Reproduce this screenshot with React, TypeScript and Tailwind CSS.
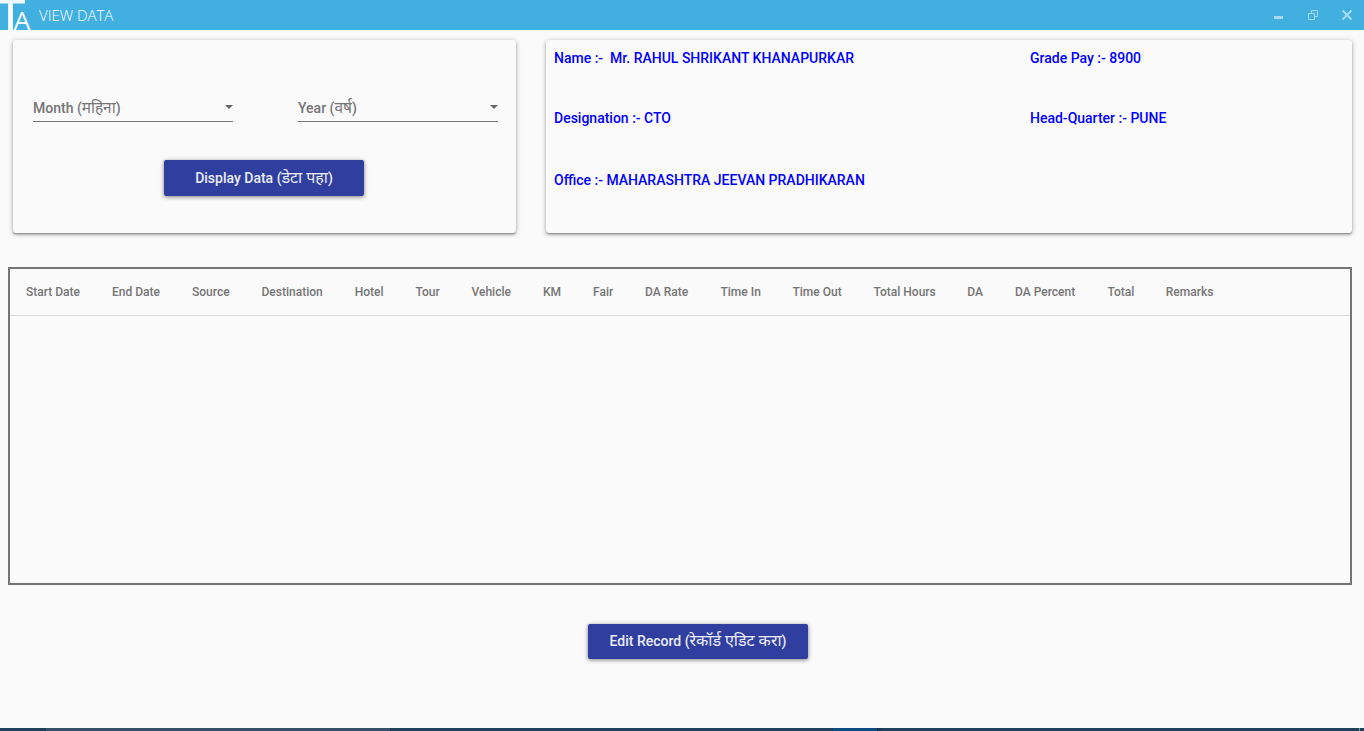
const columns = [
  { label: "Start Date", width: "w-[86px]" },
  { label: "End Date", width: "w-[80px]" },
  { label: "Source", width: "w-[69.5px]" },
  { label: "Destination", width: "w-[93.25px]" },
  { label: "Hotel", width: "w-[60.75px]" },
  { label: "Tour", width: "w-[56px]" },
  { label: "Vehicle", width: "w-[71.5px]" },
  { label: "KM", width: "w-[50px]" },
  { label: "Fair", width: "w-[52px]" },
  { label: "DA Rate", width: "w-[75.5px]" },
  { label: "Time In", width: "w-[72px]" },
  { label: "Time Out", width: "w-[81px]" },
  { label: "Total Hours", width: "w-[93.75px]" },
  { label: "DA", width: "w-[47.75px]" },
  { label: "DA Percent", width: "w-[92.5px]" },
  { label: "Total", width: "w-[58.25px]" },
  { label: "Remarks", width: "w-[80px]" },
];

const cardShadow =
  "rounded-[3px] bg-[#fafafa] shadow-[0_1px_5px_rgba(0,0,0,0.3),0_2px_2px_rgba(0,0,0,0.16),0_1px_1px_rgba(0,0,0,0.14)]";

function Select({ label, local }: { label: string; local: string }) {
  return (
    <div className="flex h-[25px] w-[200px] items-start justify-between border-b border-[#757575] text-[14px] leading-[20px] text-[#757575]">
      <span className="whitespace-nowrap pt-px">
        {label} (<span className="text-[15.4px] font-normal leading-none">{local}</span>)
      </span>
      <svg className="mt-2 h-[4px] w-[8px]" viewBox="0 0 8 4">
        <path d="M0 0h8L4 4z" fill="#666" />
      </svg>
    </div>
  );
}

function TitleBar() {
  return (
    <header className="flex h-[30px] items-center bg-[#41b0e1] text-white">
      <svg className="h-[30px] w-[32px] overflow-visible" viewBox="0 0 32 30">
        <rect width="25" height="3.5" fill="#eef8fc" />
        <rect x="8" width="5" height="30" fill="#e4f4fb" />
        <rect x="9" y="1" width="3" height="29" fill="#fafdfe" />
        <text x="13.5" y="29.8" fill="#f2fafd" fontFamily="Open Sans" fontSize="25" fontWeight="400" textLength="17" lengthAdjust="spacingAndGlyphs">A</text>
      </svg>
      <h1 className="ml-[7px] whitespace-nowrap font-['Open_Sans',sans-serif] text-[15px] font-light leading-[30px] tracking-[-0.02px]">VIEW DATA</h1>
      <div className="ml-auto flex items-center">
        <svg className="h-[30px] w-[90px]" viewBox="0 0 90 30" fill="none" stroke="#a5daf1">
          <path d="M0 17.5h9" strokeWidth="3" />
          <path d="M37.5 13V10.5h6v6h-3" />
          <path d="M34.5 13.5h6v6h-6z" />
          <path d="m68.5 10.5 9 9m0-9-9 9" strokeWidth="2" />
        </svg>
      </div>
    </header>
  );
}

export default function App() {
  return (
    <div className="flex h-[731px] w-[1364px] flex-col overflow-hidden bg-[#fafafa] font-[Roboto,'Noto_Sans',sans-serif] font-medium">
      <TitleBar />
      <main className="flex flex-1 flex-col">
        <div className="mt-[10px] flex gap-[30px] pl-[13px]">
          <section className={`h-[193px] w-[503px] pl-5 pt-[57px] ${cardShadow}`}>
            <div className="flex gap-[65px]">
              <Select label="Month" local="महिना" />
              <Select label="Year" local="वर्ष" />
            </div>
            <button className="ml-[131px] mt-[38px] flex h-[36px] w-[200px] items-center justify-center rounded-[2px] bg-[#303f9f] text-[14px] text-white/90 shadow-[0_1px_4px_rgba(0,0,0,0.5)]">
              <span className="whitespace-nowrap leading-[20px]">
                Display Data (<span className="text-[16px] font-normal leading-none">डेटा पहा</span>)
              </span>
            </button>
          </section>
          <section className={`grid h-[193px] w-[806px] grid-cols-[476px_1fr] grid-rows-[60px_62px_20px] whitespace-pre pl-2 pt-2 text-[14px] leading-[20px] text-[#0000ff] ${cardShadow}`}>
            <span>{"Name :-  Mr. RAHUL SHRIKANT KHANAPURKAR"}</span>
            <span>Grade Pay :- 8900</span>
            <span>Designation :- CTO</span>
            <span>Head-Quarter :- PUNE</span>
            <span>Office :- MAHARASHTRA JEEVAN PRADHIKARAN</span>
          </section>
        </div>
        <section className="ml-2 mt-[34px] h-[318px] w-[1344px] border-2 border-[#757575]">
          <div className="flex h-[47px] items-center border-b border-[#dadada] pl-4 text-[12px] text-[#757575]">
            {columns.map((column) => (
              <div key={column.label} className={`shrink-0 whitespace-nowrap ${column.width}`}>{column.label}</div>
            ))}
          </div>
        </section>
        <button className="ml-[588px] mt-[39px] flex h-[35px] w-[220px] items-center justify-center rounded-[2px] bg-[#303f9f] pb-px text-[14px] text-white/90 shadow-[0_1px_4px_rgba(0,0,0,0.5)]">
          <span className="whitespace-nowrap leading-[20px]">
            Edit Record (<span className="text-[16px] font-normal leading-none">रेकॉर्ड एडिट करा</span>)
          </span>
        </button>
      </main>
      <footer className="flex h-[3px] bg-[#1f405a]">
        <div className="ml-[46px] w-[344px] bg-[#344f66]" />
        <div className="ml-[443px] w-[44px] bg-[#0b4b82]" />
        <div className="w-px bg-[#102c44]" />
        <div className="w-[4px] bg-[#1a3a58]" />
        <div className="ml-auto mr-[4px] w-px bg-[#8696a3]" />
      </footer>
    </div>
  );
}
